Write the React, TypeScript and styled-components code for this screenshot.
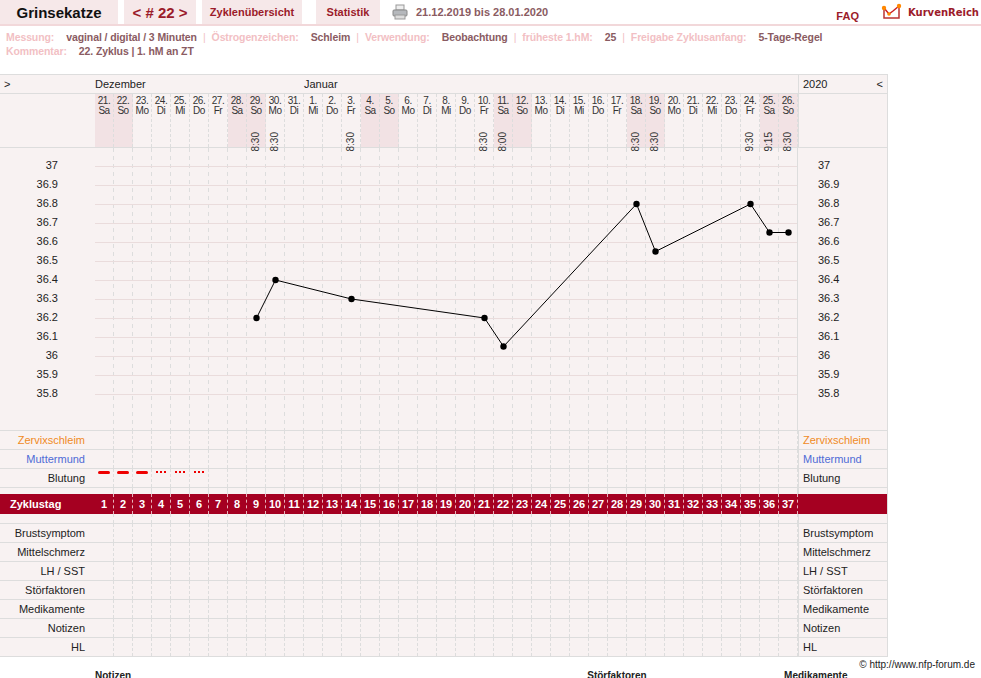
import React from "react";
import styled, { createGlobalStyle } from "styled-components";

const Global = createGlobalStyle`
  body { margin: 0; background: #fff; font-family: "Liberation Sans", Arial, sans-serif; font-size: 11px; color: #222; }
`;

const COL = 19;
const N = 37;
const WD = ["Sa", "So", "Mo", "Di", "Mi", "Do", "Fr"];
const days = Array.from({ length: N }, (_, i) => {
  const d = i < 11 ? 21 + i : i - 10;
  return { d, wd: WD[i % 7], we: i % 7 < 2 };
});
const times: Record<number, string> = { 8: "8:30", 9: "8:30", 13: "8:30", 20: "8:30", 21: "8:00", 28: "8:30", 29: "8:30", 34: "9:30", 35: "9:15", 36: "8:30" };
const temps: [number, number][] = [[8, 36.2], [9, 36.4], [13, 36.3], [20, 36.2], [21, 36.05], [28, 36.8], [29, 36.55], [34, 36.8], [35, 36.65], [36, 36.65]];
const scale = ["37", "36.9", "36.8", "36.7", "36.6", "36.5", "36.4", "36.3", "36.2", "36.1", "36", "35.9", "35.8"];
const ty = (t: number) => 18 + (37 - t) * 190;

const Top = styled.div`
  display: flex; align-items: stretch; height: 24px; border-bottom: 2px solid #f2d8da;
`;
const Tab = styled.div<{ $w: number; $gap?: number; $big?: boolean; $dark?: boolean }>`
  width: ${p => p.$w}px; margin-right: ${p => p.$gap ?? 6}px; background: #f6e8e9; display: flex; align-items: center; justify-content: center;
  font-weight: bold; font-size: ${p => (p.$big ? 15 : 11)}px; color: ${p => (p.$dark ? "#111" : "#9b1b2a")};
`;
const Range = styled.div`
  display: flex; align-items: center; gap: 8px; font-weight: bold; font-size: 11px; color: #8a5b62; margin-left: 6px; flex: 1;
`;
const Faq = styled.div`
  color: #9b1b2a; font-weight: bold; font-size: 11px; align-self: flex-end; margin-right: 22px; padding-bottom: 2px;
`;
const Logo = styled.div`
  display: flex; align-items: center; gap: 5px; font-weight: bold; font-size: 10px; color: #9b1b2a; margin-right: 2px; font-family: "DejaVu Sans", sans-serif;
`;
const Meta = styled.div`
  padding: 4px 6px 0; line-height: 14px; font-weight: bold; color: #8a5b62; font-size: 10.5px; letter-spacing: -0.1px;
  & span.k { color: #f2bfc4; margin-right: 12px; }
  & span.s { color: #f2bfc4; margin: 0 6px; font-weight: normal; }
`;
const Table = styled.div`
  margin-top: 16px; width: 887px; border: 1px solid #ddd; border-left: none; background: #f8f2f2;
`;
const Row = styled.div<{ $h: number; $bg?: string; $top?: boolean }>`
  display: flex; height: ${p => p.$h}px; background: ${p => p.$bg || "transparent"};
  border-top: ${p => (p.$top ? "1px solid #ddd" : "none")};
`;
const Label = styled.div<{ $align?: string; $color?: string; $w?: number }>`
  width: ${p => p.$w || 95}px; flex-shrink: 0; display: flex; align-items: center;
  justify-content: ${p => p.$align || "flex-end"}; padding: 0 10px 0 4px; box-sizing: border-box;
  color: ${p => p.$color || "#222"};
`;
const Right = styled(Label)`
  width: 89px; justify-content: flex-start; padding-left: 4px; border-left: 1px solid #ddd;
`;
const Cell = styled.div<{ $we?: boolean }>`
  width: ${COL}px; flex-shrink: 0; box-sizing: border-box; border-right: 1px dashed #ddd;
  background: ${p => (p.$we ? "#f2e2e4" : "transparent")}; position: relative;
`;
const DateCell = styled(Cell)`
  display: flex; flex-direction: column; align-items: center; font-size: 10px; line-height: 10px; padding-top: 2px; color: #333;
  letter-spacing: -0.5px;
`;
const Time = styled.div`
  margin-top: 16px; writing-mode: vertical-rl; transform: rotate(180deg); font-size: 10px; letter-spacing: 0;
`;
const Scale = styled.div`
  width: 95px; flex-shrink: 0; position: relative;
`;
const ScaleTxt = styled.div<{ $left?: boolean }>`
  position: absolute; font-size: 11px; ${p => (p.$left ? "right: 37px;" : "left: 20px;")}
`;
const ZCell = styled.div`
  width: ${COL}px; flex-shrink: 0; box-sizing: border-box; border-right: 1px dashed #e8b3bb; color: #fff; font-weight: bold;
  display: flex; align-items: center; justify-content: center; font-size: 11px;
`;
const Blood = styled.div<{ $dots?: boolean }>`
  position: absolute; top: 2px; left: 3px; width: 12px; height: ${p => (p.$dots ? 2 : 3)}px;
  ${p => (p.$dots ? "background: radial-gradient(circle, #e00 1px, transparent 1.2px) 0 0/4px 2px repeat-x;" : "background: #e00; border-radius: 2px;")}
`;
const Foot = styled.div`
  display: flex; justify-content: flex-end; font-size: 10px; margin: 2px 6px 0 0;
`;
const Bottom = styled.div`
  display: flex; font-weight: bold; font-size: 10px; padding-left: 95px; height: 12px;
  & > div { width: 500px; } & > div + div { width: 200px; }
`;

const Cells = ({ children }: { children?: (i: number) => React.ReactNode }) => (
  <>{days.map((_, i) => <Cell key={i}>{children && children(i)}</Cell>)}</>
);

const rows = ["Brustsymptom", "Mittelschmerz", "LH / SST", "Störfaktoren", "Medikamente", "Notizen", "HL"];

export default function App() {
  const W = N * COL;
  const pts = temps.map(([i, t]) => [i * COL + 9.5, ty(t)]);
  return (
    <>
      <Global />
      <Top>
        <Tab $w={118} $big $dark>Grinsekatze</Tab>
        <Tab $w={72} $big>&lt; # 22 &gt;</Tab>
        <Tab $w={100} $gap={14}>Zyklenübersicht</Tab>
        <Tab $w={64}>Statistik</Tab>
        <Range>
          <svg width="16" height="16" viewBox="0 0 16 16">
            <rect x="4" y="1" width="8" height="5" fill="#eee" stroke="#999" />
            <rect x="1" y="6" width="14" height="6" rx="1" fill="#b5b8bc" stroke="#888" />
            <rect x="3" y="11" width="10" height="4" fill="#ddd" stroke="#999" />
          </svg>
          21.12.2019 bis 28.01.2020
        </Range>
        <Faq>FAQ</Faq>
        <Logo>
          <svg width="22" height="18" viewBox="0 0 22 18">
            <path d="M3 5 L3 15 L18 15 L18 5" fill="none" stroke="#b33" strokeWidth="1.5" />
            <polyline points="3,5 8,11 12,8 18,3" fill="none" stroke="#c22" strokeWidth="1.5" />
            <circle cx="3" cy="5" r="2.2" fill="#f80" />
            <circle cx="8" cy="11" r="1.8" fill="#f80" />
            <circle cx="18" cy="3" r="2.2" fill="#f80" />
          </svg>
          KurvenReich
        </Logo>
      </Top>
      <Meta>
        <div>
          <span className="k">Messung:</span>vaginal / digital / 3 Minuten<span className="s">|</span>
          <span className="k">Östrogenzeichen:</span>Schleim<span className="s">|</span>
          <span className="k">Verwendung:</span>Beobachtung<span className="s">|</span>
          <span className="k">früheste 1.hM:</span>25<span className="s">|</span>
          <span className="k">Freigabe Zyklusanfang:</span>5-Tage-Regel
        </div>
        <div><span className="k">Kommentar:</span>22. Zyklus | 1. hM an ZT</div>
      </Meta>
      <Table>
        <Row $h={18}>
          <Label $align="flex-start">&gt;</Label>
          <div style={{ width: W, display: "flex", alignItems: "center" }}>
            <span style={{ width: 209 }}>Dezember</span><span>Januar</span>
          </div>
          <Right style={{ justifyContent: "space-between", paddingRight: 4 }}><span>2020</span><span>&lt;</span></Right>
        </Row>
        <Row $h={53} $top>
          <Label />
          {days.map((d, i) => (
            <DateCell key={i} $we={d.we}>
              <span>{d.d}.</span><span>{d.wd}</span>
              {times[i] && <Time>{times[i]}</Time>}
            </DateCell>
          ))}
          <Right />
        </Row>
        <Row $h={282} $top>
          <Scale>{scale.map((s, k) => <ScaleTxt $left key={s} style={{ top: 11 + k * 19 }}>{s}</ScaleTxt>)}</Scale>
          <svg width={W} height={282}>
            {days.map((_, i) => <line key={i} x1={i * COL + 18.5} x2={i * COL + 18.5} y1={0} y2={282} stroke="#ddd" strokeDasharray="4 4" />)}
            {scale.map((_, k) => <line key={k} x1={0} x2={W} y1={18.5 + k * 19} y2={18.5 + k * 19} stroke="#eadcdc" />)}
            <polyline points={pts.map(p => p.join(",")).join(" ")} fill="none" stroke="#000" strokeWidth="1" />
            {pts.map(([x, y], k) => <circle key={k} cx={x} cy={y} r="3.2" fill="#000" />)}
          </svg>
          <Scale style={{ width: 89, borderLeft: "1px solid #ddd" }}>{scale.map((s, k) => <ScaleTxt key={s} style={{ top: 11 + k * 19 }}>{s}</ScaleTxt>)}</Scale>
        </Row>
        {[["Zervixschleim", "#f08a1e"], ["Muttermund", "#4e6bd6"], ["Blutung", "#222"]].map(([n, c]) => (
          <Row $h={18} $top key={n}>
            <Label $color={c}>{n}</Label>
            <Cells>{i => (n === "Blutung" && i < 6 ? <Blood $dots={i > 2} /> : null)}</Cells>
            <Right $color={c}>{n}</Right>
          </Row>
        ))}
        <Row $h={6} $top><Label /><Cells /><Right /></Row>
        <Row $h={20} $bg="#a50021">
          <Label $align="flex-start" style={{ color: "#fff", fontWeight: "bold", paddingLeft: 10 }}>Zyklustag</Label>
          {days.map((_, i) => <ZCell key={i}>{i + 1}</ZCell>)}
          <div style={{ flex: 1 }} />
        </Row>
        <Row $h={9}><Label /><Cells /><Right /></Row>
        {rows.map(n => (
          <Row $h={18} $top key={n}>
            <Label>{n}</Label>
            <Cells />
            <Right>{n}</Right>
          </Row>
        ))}
      </Table>
      <Foot>© http://www.nfp-forum.de</Foot>
      <Bottom><div>Notizen</div><div>Störfaktoren</div><div>Medikamente</div></Bottom>
    </>
  );
}
